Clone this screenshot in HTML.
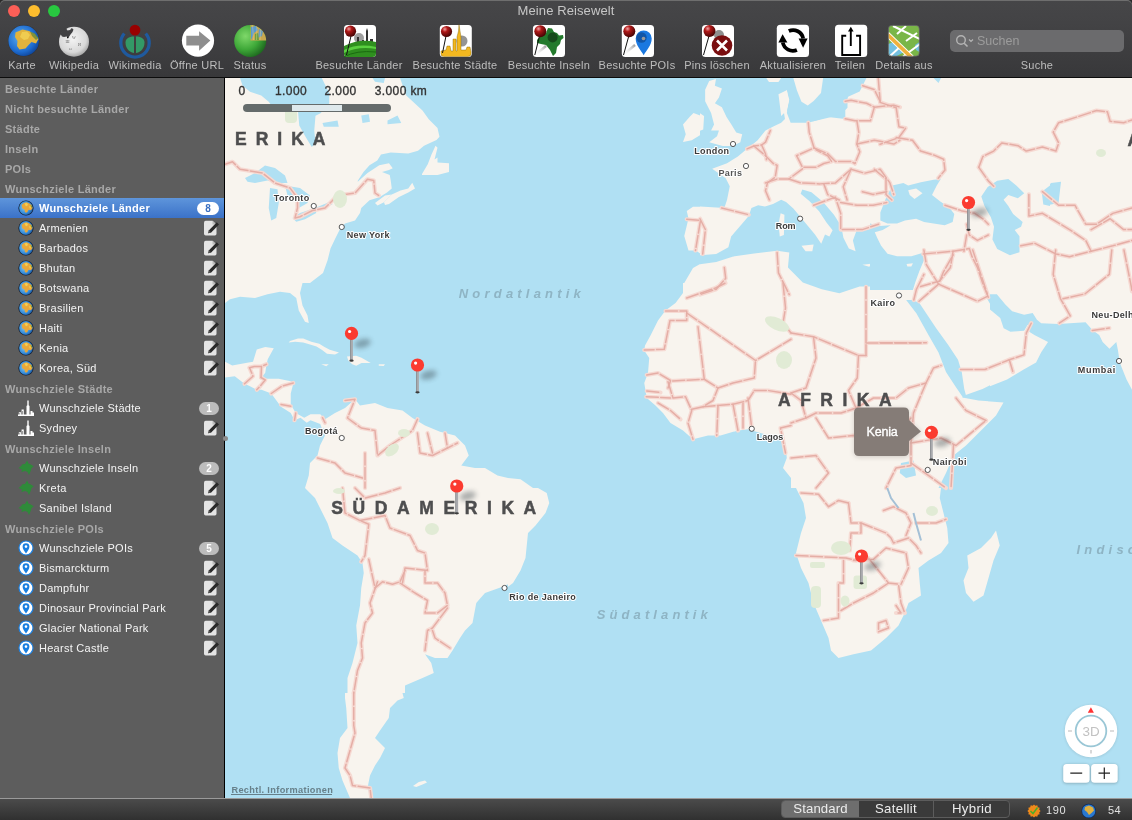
<!DOCTYPE html>
<html><head><meta charset="utf-8">
<style>
*{margin:0;padding:0;box-sizing:border-box}
html,body{width:1132px;height:820px;overflow:hidden;background:#2b2b2b;font-family:"Liberation Sans",sans-serif}
svg{display:block}
#toolbar{position:absolute;left:0;top:0;width:1132px;height:77px;background:linear-gradient(#464648,#434345 30%,#38383a);border-radius:5px 5px 0 0;box-shadow:inset 0 1px 0 #6e6e6e}
#tbline{position:absolute;left:0;top:77px;width:1132px;height:1px;background:#0c0c0c}
.tl{position:absolute;top:4.9px;width:12.2px;height:12.2px;border-radius:50%}
#title{position:absolute;top:3px;left:0;width:1132px;text-align:center;color:#c6c6c6;font-size:13px;line-height:16px;letter-spacing:0.1px}
.lbl{position:absolute;top:58px;width:120px;margin-left:-60px;font-size:11px;line-height:14px;color:#bdbdbd;white-space:nowrap;text-align:center;letter-spacing:0.27px}
.tbi{position:absolute}
#search{position:absolute;left:950px;top:30px;width:174px;height:22px;border-radius:5px;background:#6b6b6d}
#search span{position:absolute;left:27px;top:3px;font-size:12.5px;line-height:16px;color:#9c9c9c}
#sidebar{position:absolute;left:0;top:78px;width:224px;height:720px;background:#5d5d5d}
#sbline{position:absolute;left:224px;top:78px;width:1px;height:720px;background:#000}
.row{position:absolute;left:0;width:224px;height:20px;font-size:11px;line-height:20px;white-space:nowrap;color:#f4f4f4;letter-spacing:0.27px}
.hdr{color:#a8a8a8;font-weight:bold;padding-left:5px;line-height:22px}
.itm{padding-left:39px}
.sel{background:linear-gradient(#5e95db,#3b72c8);color:#fff;font-weight:bold}
.badge{position:absolute;left:199px;top:3.5px;height:13px;width:20px;border-radius:7px;background:#bcbcbc;color:#fff;font-size:10px;line-height:13px;text-align:center;font-weight:bold;letter-spacing:0}
.sel .badge{background:#fff;color:#3a6fc0;left:197px;width:22px;height:13px;top:4px}
.ico{position:absolute;left:18px;top:2px;width:16px;height:16px}
.edit{position:absolute;left:202px;top:2px;width:17px;height:16px}
#map{position:absolute;left:225px;top:78px;width:907px;height:720px;background:#b0e0f3;overflow:hidden}
#bottom{position:absolute;left:0;top:798px;width:1132px;height:22px;background:linear-gradient(#4b4b4b,#303030);border-top:1px solid #9a9a9a}

.row,.lbl,#title,#search span,#bottom div,#map>svg,#toolbar>svg{will-change:transform}

</style></head><body>
<svg width="0" height="0" style="position:absolute"><defs><radialGradient id="gblue" cx="0.4" cy="0.45" r="0.7"><stop offset="0" stop-color="#8fd0f0"/><stop offset="0.65" stop-color="#3088d8"/><stop offset="1" stop-color="#123a7a"/></radialGradient>
<symbol id="sgl" viewBox="0 0 16 16"><circle cx="8" cy="8" r="7.6" fill="#141c2a"/><circle cx="8" cy="8" r="6.9" fill="url(#gblue)"/><path d="M3.5,5 L6,3 L8.5,2.2 L11,3.2 L13.5,5 L14.6,8 L13,10.3 L10.5,9.8 L9,12.5 L7,12.2 L6.5,9.5 L4.5,8.5 Z" fill="#e9a83a"/><path d="M6.5,3.5 L9,3 L10,5 L8,6.5 Z M11,6 L13,7 L12,9 Z" fill="#f4cf52"/><path d="M12.5,4.5 L14.2,6.5 L13.5,8 Z" fill="#6f9a3a"/></symbol>
<symbol id="scity" viewBox="0 0 16 16"><path d="M0,16 L0,14.5 L0.8,14.5 L0.8,12.3 L3,12.3 L3,14.5 L3.6,14.5 L3.6,9.5 L5.8,9.5 L5.8,14.5 L8.5,14.5 L8.5,6 L9.3,5.2 L9.3,1 L10,0 L10.7,1 L10.7,5.2 L11.5,6 L11.5,14.5 L12.5,14.5 L12.5,11 L14.5,11 L14.5,12.5 L16,12.5 L16,16 Z" fill="#fff"/><rect x="1.5" y="13" width="0.6" height="1.5" fill="#606060"/><rect x="4.4" y="11" width="0.6" height="3.5" fill="#606060"/></symbol>
<symbol id="sisl" viewBox="0 0 16 16"><path d="M0.5,8 L3,6.3 L4.3,4.3 L7,4 L9.1,0.5 L10.5,3.5 L12.3,4.3 L15.7,6.2 L13.5,8.2 L12.9,10.5 L11,15 L9.5,12 L7.2,11 L3.4,11.9 L4,9.5 Z" fill="#2f8a3a"/></symbol>
<symbol id="spoi" viewBox="0 0 16 16"><circle cx="8" cy="8" r="7" fill="#fff" stroke="#1a7fe0" stroke-width="1.2"/><path d="M8 13.5 C6 10.5 4.6 9 4.6 6.6 A3.4 3.4 0 0 1 11.4 6.6 C11.4 9 10 10.5 8 13.5Z" fill="#1a7fe0"/><circle cx="8" cy="6.6" r="1.3" fill="#fff"/></symbol>
<symbol id="sedit" viewBox="0 0 17 16"><path d="M2,2.5 Q2,0.8 3.7,0.8 L10.5,0.8 L14.5,4.5 L14.5,13.8 Q14.5,15.5 12.8,15.5 L3.7,15.5 Q2,15.5 2,13.8 Z" fill="#e4e4e4"/><path d="M10.5,0.8 L10.5,4.5 L14.5,4.5 Z" fill="#bdbdbd"/><path d="M6.2,13.2 L7,10.3 L14.8,2.2 L17,4.4 L9.2,12.5 Z" fill="#2a2a2a"/><path d="M6.2,13.2 L7,10.3 L9.2,12.5 Z" fill="#555"/></symbol>
</defs></svg>
<div id="toolbar">
  <div class="tl" style="left:7.9px;background:#fc5f57"></div>
  <div class="tl" style="left:27.9px;background:#fdbd2e"></div>
  <div class="tl" style="left:47.9px;background:#28c840"></div>
  <svg width="1132" height="77" viewBox="0 0 1132 77" style="position:absolute;left:0;top:0">
<defs>
<radialGradient id="kg" cx="0.4" cy="0.4" r="0.7"><stop offset="0" stop-color="#5fb0f0"/><stop offset="0.65" stop-color="#1e6cd0"/><stop offset="1" stop-color="#0a3a8a"/></radialGradient>
<radialGradient id="wg" cx="0.45" cy="0.4" r="0.65"><stop offset="0" stop-color="#f4f4f4"/><stop offset="0.7" stop-color="#d8d8d8"/><stop offset="1" stop-color="#9a9a9a"/></radialGradient>
<radialGradient id="sg" cx="0.35" cy="0.35" r="0.7"><stop offset="0" stop-color="#7fd86a"/><stop offset="0.6" stop-color="#3ea838"/><stop offset="1" stop-color="#1f6a20"/></radialGradient>
<radialGradient id="rb" cx="0.35" cy="0.3" r="0.7"><stop offset="0" stop-color="#f0a0a0"/><stop offset="0.35" stop-color="#b01818"/><stop offset="1" stop-color="#4a0505"/></radialGradient>
<linearGradient id="sh" x1="0" y1="1" x2="1" y2="0"><stop offset="0" stop-color="#fff" stop-opacity="0"/><stop offset="1" stop-color="#777" stop-opacity="0.7"/></linearGradient>
</defs>
<!-- Karte -->
<circle cx="23.7" cy="40.7" r="15.6" fill="#222" opacity="0.5"/>
<circle cx="23.7" cy="40.7" r="15.3" fill="url(#kg)"/>
<path d="M15.5,32.5 L22.5,29.5 L29,31 L34.5,34 L38.5,39 L36,43.5 L31.5,42 L28.5,45 L25.5,48.5 L19.5,49.5 L17,46 L17.5,41 L15,37 Z" fill="#e2b33c"/>
<path d="M22,32 L27,31.5 L30,35 L28,39 L24,40 L20,37 Z" fill="#f0cc50"/>
<path d="M30,31.5 L35,33.5 L38.5,38 L36,40 L32,36 Z" fill="#6a8a3a" opacity="0.8"/>
<!-- Wikipedia -->
<circle cx="74" cy="41.7" r="15" fill="url(#wg)"/>
<path d="M60.5,34 L63.5,29.5 L66,28.2 L67.5,30.5 L70,30 L71.8,28 L73.5,29.5 L72.5,32 L70.5,34.5 L68.5,37.5 L66.5,36.5 L64,37 L62,36.5 Z" fill="#414143"/><circle cx="67.8" cy="37.6" r="0.8" fill="#000"/>
<g fill="#666" font-family="Liberation Serif" font-size="4">
<text x="65.5" y="43">Ш</text><text x="72" y="38.5">W</text><text x="78" y="46">И</text><text x="69" y="50">ω</text>
</g>
<!-- Wikimedia -->
<path d="M124.3,33.5 A14.2,14.2 0 1 0 145.7,33.5" fill="none" stroke="#1f5a9e" stroke-width="3.3"/>
<path d="M134,36.5 L134,53 C128,52 125.5,47 125.5,42.5 C125.5,39 128.5,36.5 134,36.5 Z" fill="#339966"/>
<path d="M136,36.5 L136,53 C142,52 144.5,47 144.5,42.5 C144.5,39 141.5,36.5 136,36.5 Z" fill="#339966"/>
<circle cx="135" cy="30.1" r="5.4" fill="#900"/>
<!-- Öffne URL -->
<circle cx="198" cy="40.6" r="16.1" fill="#fff"/>
<path d="M186.3,35.8 L199.1,35.8 L199.1,31.3 L210.4,40.6 L199.1,50.8 L199.1,45.5 L186.3,45.5 Z" fill="#8e8e8e"/>
<!-- Status -->
<circle cx="250.2" cy="41" r="16" fill="url(#sg)"/>
<clipPath id="stc"><circle cx="250.2" cy="41" r="16"/></clipPath>
<g clip-path="url(#stc)">
<rect x="250.5" y="24" width="17" height="16.5" fill="#c9a850"/>
<path d="M251,27 L256,26 L258,30 L254,33 L252,38 L251,40 Z" fill="#5a9ad0"/>
<path d="M259,29 L263,31 L262,36 L258,38 Z" fill="#5a9ad0" opacity="0.85"/>
<path d="M255,34 L258,33 L259,40 L255,40 Z M262,25 L266,27 L266,33 L263,30 Z" fill="#6da040"/>
<path d="M252.5,24 L253.5,40 M257,24 L256.5,40 M261,25 L260,40" stroke="#e8d890" stroke-width="0.6" opacity="0.7"/>
</g>
<!-- Besuchte Länder -->
<rect x="344" y="25" width="32" height="32" rx="3.5" fill="#fff"/>
<circle cx="359" cy="38" r="5" fill="#777" opacity="0.7"/>
<path d="M357,45 L357,37 L359,37 L359,45 M362,45 L362,40 L364,40 L364,45 M366,45 L366,31 L367,28 L368,31 L368,45 M370,45 L370,39 L373,39 L373,45" fill="#333"/>
<path d="M344,46 Q360,38 376,42 L376,53.5 Q376,57 372.5,57 L347.5,57 Q344,57 344,53.5 Z" fill="#2f8f1f"/>
<path d="M344,50 Q358,43 376,47 L376,49 Q358,46 344,53 Z" fill="#5ad040"/>
<path d="M344,57 Q356,50 376,52" fill="none" stroke="#1a6a10" stroke-width="1"/>
<line x1="351" y1="36" x2="346.5" y2="55" stroke="#111" stroke-width="1"/>
<circle cx="350.5" cy="31.2" r="5.6" fill="url(#rb)"/>
<!-- Besuchte Städte -->
<rect x="439.8" y="25" width="32" height="32" rx="3.5" fill="#fff"/>
<circle cx="462" cy="41" r="5.5" fill="#666" opacity="0.7"/>
<path d="M441,54 L441,51 L446,50 L447,46 L450,46 L451,51 L453,51 L453,39 L456,39 L456,51 L457,51 L457,37 L458.5,31 L459,24.5 L460,31 L461,37 L461,50 L466,50 L467,47 L470,47 L471,52 L471,53.5 Q471,56.5 468,56.5 L444,56.5 Q441,56.5 441,54 Z" fill="#f3b820" stroke="#7a5a00" stroke-width="0.4"/>
<line x1="446" y1="36" x2="442.5" y2="53" stroke="#111" stroke-width="1"/>
<circle cx="446.5" cy="31.5" r="5.6" fill="url(#rb)"/>
<!-- Besuchte Inseln -->
<rect x="532.9" y="24.9" width="32.1" height="32.1" rx="3.5" fill="#fff"/>
<path d="M537,40 L541,35 L546,33 L548,28 L552,28.5 L554,32 L557,33 L559,35.5 L563,35 L563.5,38 L561,40 L560,44 L557,47 L556,53 L553,56 L550,50 L546,45 L541,44 L537,43 Z" fill="#237a2c"/>
<circle cx="552.6" cy="37.5" r="5" fill="#164a1b"/>
<path d="M535,55 L546,46" stroke="url(#sh)" stroke-width="2.5"/>
<line x1="539.5" y1="36" x2="534.8" y2="55" stroke="#111" stroke-width="1"/>
<circle cx="540.3" cy="31.2" r="6" fill="url(#rb)"/>
<!-- Besuchte POIs -->
<rect x="621.8" y="24.9" width="32.2" height="32.1" rx="3.5" fill="#fff"/>
<path d="M643.7,55.3 C641,50 635.7,45.5 635.7,38.5 A8,8 0 0 1 651.7,38.5 C651.7,45.5 646.4,50 643.7,55.3 Z" fill="#1a78e0"/>
<circle cx="641.5" cy="37.5" r="5.2" fill="#0d3f80" opacity="0.6"/>
<circle cx="643.5" cy="38.5" r="1.8" fill="#999"/>
<path d="M623,55 L635,45" stroke="url(#sh)" stroke-width="2.5"/>
<line x1="628.8" y1="36" x2="623.5" y2="55" stroke="#111" stroke-width="1"/>
<circle cx="629.3" cy="31.2" r="6" fill="url(#rb)"/>
<!-- Pins löschen -->
<rect x="702" y="25" width="32" height="32" rx="3.5" fill="#fff"/>
<circle cx="719" cy="35" r="5" fill="#444" opacity="0.6"/>
<circle cx="722" cy="45.5" r="10.3" fill="#7a0e10"/>
<path d="M717,40.5 L727,50.5 M727,40.5 L717,50.5" stroke="#fff" stroke-width="2.6"/>
<line x1="709" y1="36" x2="703.5" y2="55" stroke="#111" stroke-width="1"/>
<circle cx="709.5" cy="31" r="6" fill="url(#rb)"/>
<!-- Aktualisieren -->
<rect x="776.8" y="24.7" width="32.2" height="32.2" rx="3.5" fill="#fff"/>
<path d="M788.8,31.1 A10.3,10.3 0 0 1 803.2,38.5" fill="none" stroke="#000" stroke-width="3.8"/>
<path d="M798.6,38.5 L807.6,38.5 L803.1,47.8 Z" fill="#000"/>
<path d="M796.9,50.0 A10.3,10.3 0 0 1 782.8,42.5" fill="none" stroke="#000" stroke-width="3.8"/>
<path d="M778.4,42.5 L787.4,42.5 L782.6,34.3 Z" fill="#000"/>
<!-- Teilen -->
<rect x="835" y="24.7" width="32.2" height="32.2" rx="3.5" fill="#fff"/>
<path d="M846.2,35.7 L842.2,35.7 L842.2,55 L860.1,55 L860.1,35.7 L856.1,35.7" fill="none" stroke="#000" stroke-width="1.9"/>
<path d="M850.8,46 L850.8,30" stroke="#000" stroke-width="1.9"/>
<path d="M848,31.5 L850.8,26.8 L853.6,31.5 Z" fill="#000"/>
<!-- Details aus -->
<clipPath id="dclip"><rect x="888.4" y="25.4" width="30.9" height="30.8" rx="3.5"/></clipPath>
<g clip-path="url(#dclip)">
<rect x="888.4" y="25.4" width="30.9" height="30.8" fill="#7ab648"/>
<path d="M888,44 L894,42 L900,46 L904,52 L896,56.5 L888,56.5 Z" fill="#74c0e0"/>
<path d="M915,45 L919.5,42 L919.5,52 L916,50 Z" fill="#74c0e0"/>
<path d="M893,26 L920,39 M903,56.5 L920,44 M889,57 L901,46 M897,34 L906,26 M906,41 L917,33" stroke="#fff" stroke-width="2"/>
<path d="M887,34 L912,58" stroke="#fff" stroke-width="5.5"/>
<path d="M887,34 L912,58" stroke="#efb13c" stroke-width="3.8"/>
</g>
<rect x="888.4" y="25.4" width="30.9" height="30.8" rx="3.5" fill="none" stroke="#6a6a6a" stroke-width="0.8"/>
</svg>
<div id="title">Meine Reisewelt</div>
  <div class="lbl" style="left:22.4px">Karte</div>
  <div class="lbl" style="left:73.7px">Wikipedia</div>
  <div class="lbl" style="left:134.6px">Wikimedia</div>
  <div class="lbl" style="left:197.2px">Öffne URL</div>
  <div class="lbl" style="left:249.5px">Status</div>
  <div class="lbl" style="left:359.2px">Besuchte Länder</div>
  <div class="lbl" style="left:455.2px">Besuchte Städte</div>
  <div class="lbl" style="left:549px">Besuchte Inseln</div>
  <div class="lbl" style="left:637.3px">Besuchte POIs</div>
  <div class="lbl" style="left:717.4px">Pins löschen</div>
  <div class="lbl" style="left:792.6px">Aktualisieren</div>
  <div class="lbl" style="left:850.4px">Teilen</div>
  <div class="lbl" style="left:903.7px">Details aus</div>
  <div class="lbl" style="left:1036.9px">Suche</div>
  <div id="search"><svg style="position:absolute;left:5px;top:4px" width="20" height="14" viewBox="0 0 20 14"><circle cx="6" cy="6" r="4.3" fill="none" stroke="#b4b4b4" stroke-width="1.4"/><path d="M9.2 9.2 L12.5 12.5" stroke="#b4b4b4" stroke-width="1.6"/><path d="M14 5.5 L16 7.5 L18 5.5" fill="none" stroke="#b4b4b4" stroke-width="1.2"/></svg><span>Suchen</span></div>
</div>

<div id="tbline"></div>
<div id="sidebar"></div>
<div id="sbline"></div>
<div class="row hdr" style="top:78px">Besuchte Länder</div>
<div class="row hdr" style="top:98px">Nicht besuchte Länder</div>
<div class="row hdr" style="top:118px">Städte</div>
<div class="row hdr" style="top:138px">Inseln</div>
<div class="row hdr" style="top:158px">POIs</div>
<div class="row hdr" style="top:178px">Wunschziele Länder</div>
<div class="row itm sel" style="top:198px"><svg class="ico" viewBox="0 0 16 16"><use href="#sgl"/></svg>Wunschziele Länder<div class="badge">8</div></div>
<div class="row itm" style="top:218px"><svg class="ico" viewBox="0 0 16 16"><use href="#sgl"/></svg>Armenien<svg class="edit" viewBox="0 0 17 16"><use href="#sedit"/></svg></div>
<div class="row itm" style="top:238px"><svg class="ico" viewBox="0 0 16 16"><use href="#sgl"/></svg>Barbados<svg class="edit" viewBox="0 0 17 16"><use href="#sedit"/></svg></div>
<div class="row itm" style="top:258px"><svg class="ico" viewBox="0 0 16 16"><use href="#sgl"/></svg>Bhutan<svg class="edit" viewBox="0 0 17 16"><use href="#sedit"/></svg></div>
<div class="row itm" style="top:278px"><svg class="ico" viewBox="0 0 16 16"><use href="#sgl"/></svg>Botswana<svg class="edit" viewBox="0 0 17 16"><use href="#sedit"/></svg></div>
<div class="row itm" style="top:298px"><svg class="ico" viewBox="0 0 16 16"><use href="#sgl"/></svg>Brasilien<svg class="edit" viewBox="0 0 17 16"><use href="#sedit"/></svg></div>
<div class="row itm" style="top:318px"><svg class="ico" viewBox="0 0 16 16"><use href="#sgl"/></svg>Haiti<svg class="edit" viewBox="0 0 17 16"><use href="#sedit"/></svg></div>
<div class="row itm" style="top:338px"><svg class="ico" viewBox="0 0 16 16"><use href="#sgl"/></svg>Kenia<svg class="edit" viewBox="0 0 17 16"><use href="#sedit"/></svg></div>
<div class="row itm" style="top:358px"><svg class="ico" viewBox="0 0 16 16"><use href="#sgl"/></svg>Korea, Süd<svg class="edit" viewBox="0 0 17 16"><use href="#sedit"/></svg></div>
<div class="row hdr" style="top:378px">Wunschziele Städte</div>
<div class="row itm" style="top:398px"><svg class="ico" viewBox="0 0 16 16"><use href="#scity"/></svg>Wunschziele Städte<div class="badge">1</div></div>
<div class="row itm" style="top:418px"><svg class="ico" viewBox="0 0 16 16"><use href="#scity"/></svg>Sydney<svg class="edit" viewBox="0 0 17 16"><use href="#sedit"/></svg></div>
<div class="row hdr" style="top:438px">Wunschziele Inseln</div>
<div class="row itm" style="top:458px"><svg class="ico" viewBox="0 0 16 16"><use href="#sisl"/></svg>Wunschziele Inseln<div class="badge">2</div></div>
<div class="row itm" style="top:478px"><svg class="ico" viewBox="0 0 16 16"><use href="#sisl"/></svg>Kreta<svg class="edit" viewBox="0 0 17 16"><use href="#sedit"/></svg></div>
<div class="row itm" style="top:498px"><svg class="ico" viewBox="0 0 16 16"><use href="#sisl"/></svg>Sanibel Island<svg class="edit" viewBox="0 0 17 16"><use href="#sedit"/></svg></div>
<div class="row hdr" style="top:518px">Wunschziele POIs</div>
<div class="row itm" style="top:538px"><svg class="ico" viewBox="0 0 16 16"><use href="#spoi"/></svg>Wunschziele POIs<div class="badge">5</div></div>
<div class="row itm" style="top:558px"><svg class="ico" viewBox="0 0 16 16"><use href="#spoi"/></svg>Bismarckturm<svg class="edit" viewBox="0 0 17 16"><use href="#sedit"/></svg></div>
<div class="row itm" style="top:578px"><svg class="ico" viewBox="0 0 16 16"><use href="#spoi"/></svg>Dampfuhr<svg class="edit" viewBox="0 0 17 16"><use href="#sedit"/></svg></div>
<div class="row itm" style="top:598px"><svg class="ico" viewBox="0 0 16 16"><use href="#spoi"/></svg>Dinosaur Provincial Park<svg class="edit" viewBox="0 0 17 16"><use href="#sedit"/></svg></div>
<div class="row itm" style="top:618px"><svg class="ico" viewBox="0 0 16 16"><use href="#spoi"/></svg>Glacier National Park<svg class="edit" viewBox="0 0 17 16"><use href="#sedit"/></svg></div>
<div class="row itm" style="top:638px"><svg class="ico" viewBox="0 0 16 16"><use href="#spoi"/></svg>Hearst Castle<svg class="edit" viewBox="0 0 17 16"><use href="#sedit"/></svg></div>
<div id="map"><svg width="907" height="720" viewBox="0 0 907 720" style="position:absolute;left:0;top:0">
<defs>
<clipPath id="cA"><rect width="1132" height="820"/></clipPath>
<clipPath id="cB"><rect width="232" height="820"/></clipPath>
<clipPath id="cC"><rect width="1132" height="420"/></clipPath>
</defs>
<g fill="#f8f4ee">
<!-- T00 -->
<g transform="translate(0,0) scale(0.25)" clip-path="url(#cA)">
<path d="M0,0 L700,0 L725,70 L790,130 L815,165 L850,200 L858,235 L846,248 L796,271 L772,291 L733,302 L663,298 L624,306 L609,330 L578,349 L554,376 L531,411 L531,415 L570,380 L617,349 L656,341 L671,361 L656,368 L628,376 L659,388 L663,411 L667,442 L648,458 L617,477 L578,489 L545,520 L540,540 L520,570 L480,582 L462,600 L442,640 L422,682 L410,730 L392,780 L340,820 L0,820 Z"/>
<path d="M788,384 L811,345 L826,306 L842,271 L850,279 L838,326 L850,318 L850,338 L896,341 L896,376 L850,388 L788,388 Z"/>
<path d="M636,497 L667,466 L702,450 L733,442 L749,419 L760,442 L733,458 L694,477 L656,504 L640,508 Z"/>
<path d="M600,500 L640,470 L667,466 L636,497 L610,510 Z"/>
<g fill="#b0e0f3">
<path d="M60,0 L70,30 L100,55 L145,70 L175,95 L190,115 L292,132 L297,190 L322,235 L347,276 L362,261 L357,211 L362,151 L382,141 L417,101 L417,61 L387,0 Z"/>
<path d="M590,0 L640,0 L635,20 L600,15 Z"/>
<path d="M80,400 L120,380 L160,350 L200,360 L240,390 L250,420 L210,420 L170,410 L120,420 L90,415 Z"/>
<path d="M180,440 L210,445 L215,500 L205,560 L185,570 L175,520 Z"/>
<path d="M240,430 L300,440 L340,470 L330,500 L295,520 L280,480 L250,470 Z"/>
<path d="M270,560 L300,540 L360,520 L365,540 L320,565 L285,575 Z"/>
<path d="M360,520 L420,495 L430,505 L380,525 Z"/>
<path d="M390,180 L450,170 L455,195 L395,195 Z"/>
<path d="M650,170 L690,150 L705,180 L650,185 Z"/>
<path d="M545,150 L575,145 L580,175 L550,180 Z"/>
</g>
</g>
<!-- T01 -->
<g transform="translate(283,0) scale(0.25)" clip-path="url(#cA)">
<path d="M805,12 L832,4 L828,31 L855,43 L843,78 L828,101 L855,117 L875,155 L894,186 L913,218 L937,225 L929,256 L898,272 L859,272 L805,256 L836,233 L843,210 L812,210 L824,186 L812,140 L789,93 L789,47 Z"/>
<path d="M700,186 L727,155 L742,140 L774,152 L781,171 L774,225 L735,249 L700,256 L711,225 Z"/>
<path d="M1132,140 L1110,160 L1090,175 L1060,195 L1045,215 L1005,245 L975,270 L945,290 L920,315 L880,340 L845,352 L815,360 L840,385 L870,405 L882,440 L888,480 L870,520 L805,515 L740,515 L715,532 L722,562 L705,632 L722,690 L752,690 L782,712 L832,702 L880,680 L895,640 L925,600 L962,555 L975,525 L1010,512 L1062,512 L1095,492 L1132,485 Z"/>
<path d="M705,820 L740,760 L790,732 L835,742 L880,722 L960,705 L1045,700 L1132,690 L1132,820 Z"/>
<path d="M1090,545 L1105,540 L1108,600 L1100,640 L1085,630 L1092,590 Z"/>
<path d="M1085,80 L1110,50 L1132,70 L1132,150 L1100,140 L1085,110 Z"/>
<path d="M1030,0 L1090,0 L1080,15 L1045,20 Z"/>
</g>
<!-- T02 -->
<g transform="translate(566,0) scale(0.25)" clip-path="url(#cA)">
<rect width="1132" height="820"/>
<g fill="#b0e0f3">
<path d="M0,0 L22,0 L30,50 L45,100 L70,115 L110,60 L120,0 L285,0 L275,40 L235,70 L215,100 L195,150 L150,160 L70,180 L0,180 Z"/>
<path d="M30,445 L55,460 L105,505 L150,545 L195,590 L205,620 L175,640 L140,620 L150,575 L100,525 L45,470 Z"/>
<path d="M0,560 L60,590 L100,640 L125,655 L140,625 L175,640 L205,620 L215,650 L240,690 L265,690 L270,650 L260,610 L300,590 L340,600 L330,640 L350,660 L400,705 L470,720 L530,700 L540,720 L520,780 L510,820 L0,820 Z"/>
<path d="M360,520 L400,460 L420,430 L460,420 L500,440 L560,420 L600,400 L590,440 L570,470 L610,510 L660,530 L650,570 L600,590 L540,580 L470,565 L420,570 L370,575 L355,550 Z"/>
<path d="M760,480 L800,430 L850,405 L900,420 L930,470 L890,490 L850,490 L860,540 L890,560 L920,600 L910,700 L860,700 L820,650 L810,600 L790,540 Z"/>
<path d="M1000,470 L1040,420 L1080,415 L1070,500 L1020,510 Z"/>
<path d="M570,0 L600,0 L590,20 Z"/>
</g>
<path d="M470,450 L505,445 L530,470 L490,485 Z"/>
<path d="M40,675 L90,668 L85,690 L55,690 Z"/>
<path d="M455,745 L490,740 L480,755 Z"/>
</g>
<!-- T03 -->
<g transform="translate(849,0) scale(0.25)" clip-path="url(#cB)"><rect width="232" height="820"/></g>
<!-- T10 -->
<g transform="translate(0,205) scale(0.25)" clip-path="url(#cA)">
<path d="M0,0 L310,0 L300,40 L310,90 L330,130 L335,160 L320,155 L295,110 L285,60 L260,40 L220,35 L170,45 L120,60 L60,55 L20,65 L0,80 Z"/>
<path d="M0,315 L29,330 L83,320 L112,315 L127,266 L161,256 L195,261 L171,305 L166,325 L161,359 L146,378 L166,383 L215,383 L263,393 L273,403 L263,442 L263,486 L283,520 L317,539 L342,525 L381,525 L405,549 L420,535 L390,588 L381,564 L342,549 L327,559 L302,539 L278,549 L263,520 L224,495 L185,442 L146,427 L127,427 L98,412 L78,403 L39,373 L0,378 Z"/>
<path d="M400,545 L440,520 L480,500 L520,465 L540,490 L600,480 L650,500 L710,510 L750,540 L800,570 L860,595 L920,610 L960,650 L975,690 L945,730 L1000,740 L1040,740 L1090,770 L1132,780 L1132,820 L320,820 L335,770 L340,720 L370,690 L380,650 L400,610 L395,570 Z"/>
<path d="M255,238 L260,232 L292,222 L313,222 L345,235 L377,243 L398,256 L419,267 L456,278 L440,286 L408,283 L387,267 L366,254 L340,246 L313,238 L281,235 Z"/>
<path d="M488,294 L525,291 L546,299 L583,320 L546,320 L525,331 L509,325 L493,310 Z"/>
<path d="M385,325 L415,325 L405,333 Z"/>
<path d="M615,325 L640,325 L635,332 L615,331 Z"/>
</g>
<!-- T11 -->
<g transform="translate(283,205) scale(0.25)" clip-path="url(#cA)">
<path d="M700,0 L1132,0 L1132,780 L1100,740 L1115,700 L1110,640 L1080,620 L1010,600 L960,585 L920,590 L850,610 L800,610 L740,625 L700,590 L650,560 L620,520 L590,490 L555,460 L550,430 L545,400 L560,360 L565,300 L545,270 L548,250 L570,210 L600,150 L630,110 L670,80 L700,40 Z"/>
<path d="M0,780 L50,785 L100,820 L0,820 Z"/>
</g>
<!-- T12 -->
<g transform="translate(566,205) scale(0.25)" clip-path="url(#cA)">
<rect width="1132" height="820"/>
<g fill="#b0e0f3">
<path d="M0,0 L505,0 L490,25 L400,22 L330,15 L250,25 L190,45 L140,30 L90,15 L0,10 Z"/>
<path d="M1132,150 L1070,160 L1000,165 L960,160 L945,200 L990,215 L1029,239 L990,290 L942,326 L864,375 L766,424 L693,450 L685,458 L750,470 L850,478 L820,530 L770,580 L700,650 L650,690 L620,760 L590,820 L1132,820 Z"/>
<path d="M453,58 L502,122 L551,210 L590,278 L620,356 L658,414 L688,458 L700,450 L693,424 L683,356 L668,307 L629,248 L580,180 L512,78 Z"/>
<path d="M780,55 L820,70 L870,120 L940,125 L965,155 L945,195 L900,185 L855,170 L835,130 L800,90 Z"/>
<path d="M440,720 L490,710 L500,770 L460,780 L435,760 Z"/>
</g>
</g>
<!-- T13 -->
<g transform="translate(849,205) scale(0.25)" clip-path="url(#cB)">
<path d="M0,0 L232,0 L232,460 L215,400 L195,340 L185,280 L180,240 L165,230 L150,260 L120,240 L100,200 L80,180 L50,160 L0,150 Z"/>
</g>
<!-- T20 -->
<g transform="translate(0,410) scale(0.25)" clip-path="url(#cA)">
<path d="M320,0 L1132,0 L1132,385 L1110,395 L1040,420 L1005,460 L990,540 L960,570 L940,600 L910,650 L890,680 L840,680 L800,665 L825,700 L835,740 L790,760 L720,790 L720,820 L490,820 L490,760 L510,700 L530,620 L525,550 L540,470 L545,400 L555,340 L550,300 L530,270 L470,230 L430,200 L410,140 L380,80 L360,40 Z"/>
</g>
<!-- T21 -->
<g transform="translate(283,410) scale(0.25)" clip-path="url(#cA)">
<path d="M0,0 L120,0 L155,20 L165,60 L150,100 L110,150 L80,180 L75,230 L70,280 L50,330 L20,380 L0,395 Z"/>
</g>
<!-- T22 -->
<g transform="translate(566,410) scale(0.25)" clip-path="url(#cA)">
<path d="M20,0 L600,0 L595,40 L610,100 L625,160 L630,220 L600,260 L550,290 L510,320 L515,380 L520,430 L470,460 L455,500 L430,550 L380,600 L320,650 L250,665 L190,680 L160,650 L150,600 L120,530 L90,460 L70,380 L40,320 L20,260 L40,180 L60,120 L50,60 L30,20 Z"/>
<path d="M820,170 L835,230 L810,290 L790,360 L770,430 L730,455 L700,420 L690,370 L710,320 L705,270 L760,240 L800,200 Z"/>
</g>
<!-- T30 -->
<g transform="translate(0,615) scale(0.25)" clip-path="url(#cC)">
<path d="M480,0 L710,0 L715,20 L690,30 L660,60 L655,100 L620,150 L600,180 L640,220 L620,260 L600,290 L580,330 L570,380 L585,420 L500,420 L470,350 L455,300 L450,240 L460,180 L490,140 L485,60 L480,20 Z"/>
<path d="M752,372 L775,356 L800,350 L808,358 L790,366 L765,376 Z"/>
</g>
<!-- PATCH EUROPE [700,78,920,300] s=3.6937 -->
<g transform="translate(475,0) scale(0.270603,0.270732)">
<rect width="813" height="820" fill="#b0e0f3"/>
<path d="M0,475 L90,480 L100,450 L110,400 L95,370 L45,335 L100,315 L140,290 L175,260 L174,262 L213,230 L242,194 L271,179 L300,165 L314,151 L307,108 L300,79 L321,43 L328,86 L321,129 L335,165 L400,165 L472,144 L537,151 L537,93 L558,43 L601,29 L608,0 L813,0 L813,392 L770,385 L720,395 L695,430 L670,470 L675,510 L700,530 L650,545 L620,560 L580,560 L565,600 L575,640 L550,630 L530,590 L522,548 L495,505 L455,458 L412,422 L378,412 L372,428 L405,455 L440,492 L468,535 L490,562 L478,585 L462,578 L448,612 L425,578 L385,530 L345,482 L318,458 L300,450 L270,465 L240,475 L215,470 L190,480 L180,510 L150,545 L115,585 L105,625 L60,650 L0,655 Z"/>
<path d="M34,11 L59,4 L55,29 L81,39 L70,72 L55,93 L81,108 L98,144 L116,172 L134,201 L156,208 L149,237 L120,251 L84,251 L34,237 L63,215 L70,194 L41,194 L52,172 L41,129 L19,86 L19,43 Z"/>
<path d="M0,130 L15,140 L12,190 L0,195 Z"/>
<path d="M640,570 L700,548 L760,540 L813,528 L813,655 L780,640 L720,650 L680,640 L650,605 Z"/>
<path d="M785,410 L813,405 L813,440 L790,435 Z"/>
<path d="M0,688 L60,680 L120,660 L200,648 L285,638 L330,645 L325,700 L380,755 L450,780 L515,795 L590,770 L660,770 L720,775 L813,780 L813,820 L0,820 Z"/>
<path d="M298,500 L312,505 L310,580 L295,585 L290,540 Z"/>
<path d="M375,620 L420,615 L415,640 L390,640 Z"/>
<path d="M600,690 L640,685 L625,697 Z"/>
<path d="M245,0 L300,0 L290,15 L255,15 Z"/>
<path d="M290,60 L320,45 L330,80 L320,120 L300,140 L295,100 Z"/>
<g fill="#b0e0f3">
<path d="M330,0 L360,0 L380,80 L400,100 L440,60 L450,0 L615,0 L605,20 L590,50 L545,70 L545,110 L520,135 L470,148 L420,160 L380,160 L335,148 L322,120 L332,80 Z"/>
</g>
<path d="M345,0 L455,0 L447,55 L420,85 L398,102 L375,88 L358,45 Z"/>
</g>
<!-- PATCH ME [870,160,1050,290] -->
<g transform="translate(645,82) scale(0.159011,0.158924)">
<rect width="1132" height="818"/>
<g fill="#b0e0f3">
<path d="M65,330 L100,240 L140,160 L210,145 L240,160 L320,140 L400,125 L445,120 L420,160 L400,200 L390,220 L440,260 L500,300 L530,340 L520,390 L470,410 L400,400 L340,390 L290,370 L220,380 L170,400 L110,400 L65,380 Z"/>
<path d="M0,400 L60,415 L130,410 L80,440 L30,455 L45,490 L70,540 L110,590 L170,605 L260,605 L345,580 L340,630 L310,700 L285,770 L270,818 L0,818 Z"/>
<path d="M700,230 L740,170 L800,130 L870,120 L920,160 L970,210 L930,240 L870,220 L840,250 L870,290 L900,340 L960,390 L950,420 L910,440 L940,480 L940,580 L880,600 L800,560 L770,500 L780,420 L760,360 L720,290 Z"/>
<path d="M1080,200 L1132,160 L1132,290 L1090,280 Z"/>
</g>
<path d="M240,190 L290,180 L330,210 L280,245 L250,220 Z"/>
<path d="M230,655 L270,650 L260,670 L235,670 Z"/>
</g>
<!-- PATCH ARABIA [990,260,1132,400] -->
<g transform="translate(765,182) scale(0.170673,0.170732)">
<rect width="832" height="820"/>
<path fill="#b0e0f3" d="M0,200 L40,200 L90,260 L130,300 L200,320 L250,310 L275,350 L300,370 L400,375 L560,365 L600,410 L640,440 L660,480 L700,520 L740,480 L750,530 L760,600 L800,700 L832,760 L832,820 L0,820 L0,740 L100,700 L200,640 L270,600 L300,540 L340,480 L260,440 L230,420 L240,380 L220,380 L200,415 L120,420 L80,400 L60,340 L0,290 Z"/>
</g>
</g>
</svg>
<svg width="907" height="720" viewBox="0 0 907 720" style="position:absolute;left:0;top:0">
<g fill="none" stroke-linejoin="round" stroke-linecap="round">
<g stroke="#f6dad3" stroke-width="4.2"><g transform="translate(0,0) scale(0.25,0.25)">
<polyline vector-effect="non-scaling-stroke" points="0,345 30,335 60,365 150,380 200,420 260,440 290,480 290,520 280,560 300,555 350,530 400,520 450,470 520,460 570,405 595,410 600,460 615,470"/>
</g>
<g transform="translate(283,0) scale(0.25,0.25)">
<polyline vector-effect="non-scaling-stroke" points="715,565 770,570 750,690"/>
</g>
<g transform="translate(655,0) scale(0.270709,0.270709)">
<polyline vector-effect="non-scaling-stroke" points="0,90 60,110 70,180 95,185 70,220 0,245"/>
<polyline vector-effect="non-scaling-stroke" points="60,220 120,230 150,270 200,285 235,300 240,340 215,370"/>
<polyline vector-effect="non-scaling-stroke" points="240,470 300,490 350,500 380,520 400,540"/>
<polyline vector-effect="non-scaling-stroke" points="320,540 330,580 360,600 400,580"/>
<polyline vector-effect="non-scaling-stroke" points="160,650 270,640 330,630 340,660 360,700 380,760 400,810"/>
<polyline vector-effect="non-scaling-stroke" points="270,640 260,700 220,750 150,770"/>
<polyline vector-effect="non-scaling-stroke" points="365,330 380,290 420,270 450,240 510,250 540,270 600,255 650,270 660,240 640,200 660,165 740,140 800,120 840,125 850,160 900,165 931,155"/>
<polyline vector-effect="non-scaling-stroke" points="365,330 400,380 420,400"/>
<polyline vector-effect="non-scaling-stroke" points="550,430 550,510 600,500 700,560 760,600 780,640"/>
<polyline vector-effect="non-scaling-stroke" points="600,420 660,470 720,470 760,540 800,540 860,500 931,480"/>
<polyline vector-effect="non-scaling-stroke" points="520,620 570,610 650,650 700,660 780,640 860,620 931,600"/>
<polyline vector-effect="non-scaling-stroke" points="780,560 850,520 900,560 931,560"/>
<polyline vector-effect="non-scaling-stroke" points="320,580 310,640"/>
</g>
<g transform="translate(475,0) scale(0.270603,0.270732)">
<polyline vector-effect="non-scaling-stroke" points="420,470 500,440 520,500 520,560 600,560 660,540"/>
<polyline vector-effect="non-scaling-stroke" points="520,460 580,470 640,470 690,460"/>
<polyline vector-effect="non-scaling-stroke" points="80,480 180,505"/>
<polyline vector-effect="non-scaling-stroke" points="0,520 20,560 10,650"/>
<polyline vector-effect="non-scaling-stroke" points="90,700 95,740 60,780 0,800"/>
<polyline vector-effect="non-scaling-stroke" points="285,645 290,720 330,800"/>
<polyline vector-effect="non-scaling-stroke" points="800,780 790,820"/>
<polyline vector-effect="non-scaling-stroke" points="600,420 640,430 690,420"/>
</g>
<g transform="translate(455,0) scale(0.194346,0.194268)">
<polyline vector-effect="non-scaling-stroke" points="345,365 380,350 420,345 440,330 465,270"/>
<polyline vector-effect="non-scaling-stroke" points="380,350 440,400 480,440 500,450 490,510 450,540 440,580 460,628"/>
<polyline vector-effect="non-scaling-stroke" points="420,345 440,390 445,420"/>
<polyline vector-effect="non-scaling-stroke" points="660,230 665,280 690,360 600,400"/>
<polyline vector-effect="non-scaling-stroke" points="600,400 630,460 700,460 740,440 780,430 760,400 700,370"/>
<polyline vector-effect="non-scaling-stroke" points="690,360 760,390 800,430 880,430 900,440"/>
<polyline vector-effect="non-scaling-stroke" points="910,220 920,280 910,340 925,380 900,440"/>
<polyline vector-effect="non-scaling-stroke" points="910,340 1000,320 1100,340 1132,320"/>
<polyline vector-effect="non-scaling-stroke" points="850,120 880,115 960,130 1000,150 1100,140 1132,150"/>
<polyline vector-effect="non-scaling-stroke" points="850,210 900,220 980,220 1000,150"/>
<polyline vector-effect="non-scaling-stroke" points="940,40 1000,60 1030,120"/>
<polyline vector-effect="non-scaling-stroke" points="1020,0 1030,120"/>
<polyline vector-effect="non-scaling-stroke" points="440,540 500,520 560,520 640,460"/>
<polyline vector-effect="non-scaling-stroke" points="560,520 620,540 720,545 800,540 880,470"/>
<polyline vector-effect="non-scaling-stroke" points="880,470 950,490 1030,470 1080,540 1100,600"/>
<polyline vector-effect="non-scaling-stroke" points="740,545 760,600 820,628"/>
<polyline vector-effect="non-scaling-stroke" points="880,470 840,560 860,628"/>
<polyline vector-effect="non-scaling-stroke" points="1000,470 1060,520 1060,600 1090,628"/>
</g>
<g transform="translate(0,205) scale(0.25,0.25)">
<polyline vector-effect="non-scaling-stroke" points="480,470 520,465 490,540 545,580 600,590 610,690 660,650 690,630 750,590 770,545"/>
<polyline vector-effect="non-scaling-stroke" points="770,600 780,680 830,690 890,660 930,640"/>
<polyline vector-effect="non-scaling-stroke" points="810,600 830,680"/>
<polyline vector-effect="non-scaling-stroke" points="880,600 890,660"/>
<polyline vector-effect="non-scaling-stroke" points="370,700 440,720 480,760 550,780"/>
<polyline vector-effect="non-scaling-stroke" points="560,680 560,820"/>
<polyline vector-effect="non-scaling-stroke" points="98,339 117,334 146,334 166,325"/>
<polyline vector-effect="non-scaling-stroke" points="146,334 144,378"/>
<polyline vector-effect="non-scaling-stroke" points="78,403 112,373 98,339"/>
<polyline vector-effect="non-scaling-stroke" points="144,378 161,388 141,412 127,427"/>
<polyline vector-effect="non-scaling-stroke" points="185,442 229,412 273,400"/>
<polyline vector-effect="non-scaling-stroke" points="224,486 263,493"/>
<polyline vector-effect="non-scaling-stroke" points="283,520 278,549"/>
<polyline vector-effect="non-scaling-stroke" points="390,539 400,559"/>
</g>
<g transform="translate(283,205) scale(0.25,0.25)">
<polyline vector-effect="non-scaling-stroke" points="630,112 715,112 715,150 648,150 625,265 545,268"/>
<polyline vector-effect="non-scaling-stroke" points="715,60 830,20 870,0"/>
<polyline vector-effect="non-scaling-stroke" points="715,120 990,310 1132,225"/>
<polyline vector-effect="non-scaling-stroke" points="760,175 785,385 650,392 640,420"/>
<polyline vector-effect="non-scaling-stroke" points="650,390 600,360 555,368"/>
<polyline vector-effect="non-scaling-stroke" points="640,395 660,460 710,455 735,510 720,560 740,625"/>
<polyline vector-effect="non-scaling-stroke" points="555,432 610,438"/>
<polyline vector-effect="non-scaling-stroke" points="553,455 650,460"/>
<polyline vector-effect="non-scaling-stroke" points="600,480 650,510 690,545"/>
<polyline vector-effect="non-scaling-stroke" points="785,385 840,420 900,400 985,380 990,310"/>
<polyline vector-effect="non-scaling-stroke" points="735,505 780,495 820,470 840,420"/>
<polyline vector-effect="non-scaling-stroke" points="840,490 835,610"/>
<polyline vector-effect="non-scaling-stroke" points="780,495 900,485 960,470 985,430"/>
<polyline vector-effect="non-scaling-stroke" points="900,485 920,590"/>
<polyline vector-effect="non-scaling-stroke" points="940,480 940,580"/>
<polyline vector-effect="non-scaling-stroke" points="960,460 975,580"/>
<polyline vector-effect="non-scaling-stroke" points="985,430 1040,430 1132,445"/>
<polyline vector-effect="non-scaling-stroke" points="1100,0 1110,100 1100,160 1132,200"/>
<polyline vector-effect="non-scaling-stroke" points="1132,570 1090,580 1110,680"/>
</g>
<g transform="translate(566,205) scale(0.25,0.25)">
<polyline vector-effect="non-scaling-stroke" points="300,15 300,290"/>
<polyline vector-effect="non-scaling-stroke" points="300,240 520,240"/>
<polyline vector-effect="non-scaling-stroke" points="0,200 90,215 270,290 300,290"/>
<polyline vector-effect="non-scaling-stroke" points="90,215 100,300 60,420 0,440"/>
<polyline vector-effect="non-scaling-stroke" points="270,290 265,380 230,430 260,500"/>
<polyline vector-effect="non-scaling-stroke" points="0,440 40,470 60,540 0,560"/>
<polyline vector-effect="non-scaling-stroke" points="60,540 100,520 200,520 260,500"/>
<polyline vector-effect="non-scaling-stroke" points="100,540 150,620 250,610 300,620 400,620"/>
<polyline vector-effect="non-scaling-stroke" points="260,500 330,460 420,460 470,420 540,400 570,340 600,330"/>
<polyline vector-effect="non-scaling-stroke" points="540,400 490,520 480,640"/>
<polyline vector-effect="non-scaling-stroke" points="480,540 420,600 400,620"/>
<polyline vector-effect="non-scaling-stroke" points="480,640 600,620 660,650 780,550"/>
<polyline vector-effect="non-scaling-stroke" points="660,460 700,510 780,550"/>
<polyline vector-effect="non-scaling-stroke" points="650,650 640,820"/>
<polyline vector-effect="non-scaling-stroke" points="480,640 480,730 420,740 380,820"/>
<polyline vector-effect="non-scaling-stroke" points="480,720 620,820"/>
<polyline vector-effect="non-scaling-stroke" points="0,700 100,690 150,760 100,820"/>
</g>
<g transform="translate(655,172) scale(0.243962,0.243902)">
<polyline vector-effect="non-scaling-stroke" points="330,490 430,490 530,450 590,430 600,340 620,300"/>
<polyline vector-effect="non-scaling-stroke" points="530,450 545,500"/>
<polyline vector-effect="non-scaling-stroke" points="0,380 190,380"/>
<polyline vector-effect="non-scaling-stroke" points="160,210 240,140 260,90 300,20"/>
<polyline vector-effect="non-scaling-stroke" points="240,140 400,210 440,190"/>
<polyline vector-effect="non-scaling-stroke" points="380,0 400,60 440,180"/>
<polyline vector-effect="non-scaling-stroke" points="720,0 710,100 740,200 780,270 735,300"/>
<polyline vector-effect="non-scaling-stroke" points="950,0 940,100 840,180 750,200"/>
<polyline vector-effect="non-scaling-stroke" points="870,330 940,320"/>
<polyline vector-effect="non-scaling-stroke" points="1000,0 1030,150 1033,170"/>
<polyline vector-effect="non-scaling-stroke" points="150,160 180,100"/>
<polyline vector-effect="non-scaling-stroke" points="180,0 190,60 240,140"/>
</g>
<g transform="translate(0,410) scale(0.25,0.25)">
<polyline vector-effect="non-scaling-stroke" points="470,0 480,100 540,130 575,145 560,270 545,295"/>
<polyline vector-effect="non-scaling-stroke" points="540,130 640,110 660,160 740,190 770,250 800,260 810,330 720,320 710,380"/>
<polyline vector-effect="non-scaling-stroke" points="575,285 600,400 630,375 670,385 700,375 720,330"/>
<polyline vector-effect="non-scaling-stroke" points="700,380 760,420 810,450 800,500 850,500 890,470 880,420 850,380 800,380 800,330"/>
<polyline vector-effect="non-scaling-stroke" points="610,375 580,460 590,500 560,540 545,620 550,680 530,730 515,820"/>
<polyline vector-effect="non-scaling-stroke" points="890,480 830,560 810,570 800,650"/>
<polyline vector-effect="non-scaling-stroke" points="830,570 840,600 900,640"/>
<polyline vector-effect="non-scaling-stroke" points="520,0 560,40 640,20 700,0"/>
</g>
<g transform="translate(566,410) scale(0.25,0.25)">
<polyline vector-effect="non-scaling-stroke" points="20,270 220,280 260,290"/>
<polyline vector-effect="non-scaling-stroke" points="230,60 240,140 280,140 280,180 240,180 235,250"/>
<polyline vector-effect="non-scaling-stroke" points="40,20 110,25 150,75 190,50 230,60"/>
<polyline vector-effect="non-scaling-stroke" points="280,140 380,180 400,200 410,220 470,200 500,230 520,260"/>
<polyline vector-effect="non-scaling-stroke" points="370,90 410,75 460,100 480,140 460,190"/>
<polyline vector-effect="non-scaling-stroke" points="500,140 580,140 620,125"/>
<polyline vector-effect="non-scaling-stroke" points="210,290 210,380 190,380 190,520 130,530"/>
<polyline vector-effect="non-scaling-stroke" points="250,290 330,285 380,240 460,260 470,320 440,385"/>
<polyline vector-effect="non-scaling-stroke" points="310,280 390,380 430,385 440,460 455,500"/>
<polyline vector-effect="non-scaling-stroke" points="200,490 250,460 330,420 390,380"/>
<polyline vector-effect="non-scaling-stroke" points="350,540 380,530 390,560 350,575 350,540"/>
<polyline vector-effect="non-scaling-stroke" points="420,470 440,500 420,500"/>
</g>
<g transform="translate(0,615) scale(0.25,0.25)">
<polyline vector-effect="non-scaling-stroke" points="515,0 515,130 520,160 480,300 500,330 510,370 580,380 585,420"/>
</g></g>
<g stroke="#e5aea6" stroke-width="1.5" stroke-dasharray="12 2.5"><g transform="translate(0,0) scale(0.25,0.25)">
<polyline vector-effect="non-scaling-stroke" points="0,345 30,335 60,365 150,380 200,420 260,440 290,480 290,520 280,560 300,555 350,530 400,520 450,470 520,460 570,405 595,410 600,460 615,470"/>
</g>
<g transform="translate(283,0) scale(0.25,0.25)">
<polyline vector-effect="non-scaling-stroke" points="715,565 770,570 750,690"/>
</g>
<g transform="translate(655,0) scale(0.270709,0.270709)">
<polyline vector-effect="non-scaling-stroke" points="0,90 60,110 70,180 95,185 70,220 0,245"/>
<polyline vector-effect="non-scaling-stroke" points="60,220 120,230 150,270 200,285 235,300 240,340 215,370"/>
<polyline vector-effect="non-scaling-stroke" points="240,470 300,490 350,500 380,520 400,540"/>
<polyline vector-effect="non-scaling-stroke" points="320,540 330,580 360,600 400,580"/>
<polyline vector-effect="non-scaling-stroke" points="160,650 270,640 330,630 340,660 360,700 380,760 400,810"/>
<polyline vector-effect="non-scaling-stroke" points="270,640 260,700 220,750 150,770"/>
<polyline vector-effect="non-scaling-stroke" points="365,330 380,290 420,270 450,240 510,250 540,270 600,255 650,270 660,240 640,200 660,165 740,140 800,120 840,125 850,160 900,165 931,155"/>
<polyline vector-effect="non-scaling-stroke" points="365,330 400,380 420,400"/>
<polyline vector-effect="non-scaling-stroke" points="550,430 550,510 600,500 700,560 760,600 780,640"/>
<polyline vector-effect="non-scaling-stroke" points="600,420 660,470 720,470 760,540 800,540 860,500 931,480"/>
<polyline vector-effect="non-scaling-stroke" points="520,620 570,610 650,650 700,660 780,640 860,620 931,600"/>
<polyline vector-effect="non-scaling-stroke" points="780,560 850,520 900,560 931,560"/>
<polyline vector-effect="non-scaling-stroke" points="320,580 310,640"/>
</g>
<g transform="translate(475,0) scale(0.270603,0.270732)">
<polyline vector-effect="non-scaling-stroke" points="420,470 500,440 520,500 520,560 600,560 660,540"/>
<polyline vector-effect="non-scaling-stroke" points="520,460 580,470 640,470 690,460"/>
<polyline vector-effect="non-scaling-stroke" points="80,480 180,505"/>
<polyline vector-effect="non-scaling-stroke" points="0,520 20,560 10,650"/>
<polyline vector-effect="non-scaling-stroke" points="90,700 95,740 60,780 0,800"/>
<polyline vector-effect="non-scaling-stroke" points="285,645 290,720 330,800"/>
<polyline vector-effect="non-scaling-stroke" points="800,780 790,820"/>
<polyline vector-effect="non-scaling-stroke" points="600,420 640,430 690,420"/>
</g>
<g transform="translate(455,0) scale(0.194346,0.194268)">
<polyline vector-effect="non-scaling-stroke" points="345,365 380,350 420,345 440,330 465,270"/>
<polyline vector-effect="non-scaling-stroke" points="380,350 440,400 480,440 500,450 490,510 450,540 440,580 460,628"/>
<polyline vector-effect="non-scaling-stroke" points="420,345 440,390 445,420"/>
<polyline vector-effect="non-scaling-stroke" points="660,230 665,280 690,360 600,400"/>
<polyline vector-effect="non-scaling-stroke" points="600,400 630,460 700,460 740,440 780,430 760,400 700,370"/>
<polyline vector-effect="non-scaling-stroke" points="690,360 760,390 800,430 880,430 900,440"/>
<polyline vector-effect="non-scaling-stroke" points="910,220 920,280 910,340 925,380 900,440"/>
<polyline vector-effect="non-scaling-stroke" points="910,340 1000,320 1100,340 1132,320"/>
<polyline vector-effect="non-scaling-stroke" points="850,120 880,115 960,130 1000,150 1100,140 1132,150"/>
<polyline vector-effect="non-scaling-stroke" points="850,210 900,220 980,220 1000,150"/>
<polyline vector-effect="non-scaling-stroke" points="940,40 1000,60 1030,120"/>
<polyline vector-effect="non-scaling-stroke" points="1020,0 1030,120"/>
<polyline vector-effect="non-scaling-stroke" points="440,540 500,520 560,520 640,460"/>
<polyline vector-effect="non-scaling-stroke" points="560,520 620,540 720,545 800,540 880,470"/>
<polyline vector-effect="non-scaling-stroke" points="880,470 950,490 1030,470 1080,540 1100,600"/>
<polyline vector-effect="non-scaling-stroke" points="740,545 760,600 820,628"/>
<polyline vector-effect="non-scaling-stroke" points="880,470 840,560 860,628"/>
<polyline vector-effect="non-scaling-stroke" points="1000,470 1060,520 1060,600 1090,628"/>
</g>
<g transform="translate(0,205) scale(0.25,0.25)">
<polyline vector-effect="non-scaling-stroke" points="480,470 520,465 490,540 545,580 600,590 610,690 660,650 690,630 750,590 770,545"/>
<polyline vector-effect="non-scaling-stroke" points="770,600 780,680 830,690 890,660 930,640"/>
<polyline vector-effect="non-scaling-stroke" points="810,600 830,680"/>
<polyline vector-effect="non-scaling-stroke" points="880,600 890,660"/>
<polyline vector-effect="non-scaling-stroke" points="370,700 440,720 480,760 550,780"/>
<polyline vector-effect="non-scaling-stroke" points="560,680 560,820"/>
<polyline vector-effect="non-scaling-stroke" points="98,339 117,334 146,334 166,325"/>
<polyline vector-effect="non-scaling-stroke" points="146,334 144,378"/>
<polyline vector-effect="non-scaling-stroke" points="78,403 112,373 98,339"/>
<polyline vector-effect="non-scaling-stroke" points="144,378 161,388 141,412 127,427"/>
<polyline vector-effect="non-scaling-stroke" points="185,442 229,412 273,400"/>
<polyline vector-effect="non-scaling-stroke" points="224,486 263,493"/>
<polyline vector-effect="non-scaling-stroke" points="283,520 278,549"/>
<polyline vector-effect="non-scaling-stroke" points="390,539 400,559"/>
</g>
<g transform="translate(283,205) scale(0.25,0.25)">
<polyline vector-effect="non-scaling-stroke" points="630,112 715,112 715,150 648,150 625,265 545,268"/>
<polyline vector-effect="non-scaling-stroke" points="715,60 830,20 870,0"/>
<polyline vector-effect="non-scaling-stroke" points="715,120 990,310 1132,225"/>
<polyline vector-effect="non-scaling-stroke" points="760,175 785,385 650,392 640,420"/>
<polyline vector-effect="non-scaling-stroke" points="650,390 600,360 555,368"/>
<polyline vector-effect="non-scaling-stroke" points="640,395 660,460 710,455 735,510 720,560 740,625"/>
<polyline vector-effect="non-scaling-stroke" points="555,432 610,438"/>
<polyline vector-effect="non-scaling-stroke" points="553,455 650,460"/>
<polyline vector-effect="non-scaling-stroke" points="600,480 650,510 690,545"/>
<polyline vector-effect="non-scaling-stroke" points="785,385 840,420 900,400 985,380 990,310"/>
<polyline vector-effect="non-scaling-stroke" points="735,505 780,495 820,470 840,420"/>
<polyline vector-effect="non-scaling-stroke" points="840,490 835,610"/>
<polyline vector-effect="non-scaling-stroke" points="780,495 900,485 960,470 985,430"/>
<polyline vector-effect="non-scaling-stroke" points="900,485 920,590"/>
<polyline vector-effect="non-scaling-stroke" points="940,480 940,580"/>
<polyline vector-effect="non-scaling-stroke" points="960,460 975,580"/>
<polyline vector-effect="non-scaling-stroke" points="985,430 1040,430 1132,445"/>
<polyline vector-effect="non-scaling-stroke" points="1100,0 1110,100 1100,160 1132,200"/>
<polyline vector-effect="non-scaling-stroke" points="1132,570 1090,580 1110,680"/>
</g>
<g transform="translate(566,205) scale(0.25,0.25)">
<polyline vector-effect="non-scaling-stroke" points="300,15 300,290"/>
<polyline vector-effect="non-scaling-stroke" points="300,240 520,240"/>
<polyline vector-effect="non-scaling-stroke" points="0,200 90,215 270,290 300,290"/>
<polyline vector-effect="non-scaling-stroke" points="90,215 100,300 60,420 0,440"/>
<polyline vector-effect="non-scaling-stroke" points="270,290 265,380 230,430 260,500"/>
<polyline vector-effect="non-scaling-stroke" points="0,440 40,470 60,540 0,560"/>
<polyline vector-effect="non-scaling-stroke" points="60,540 100,520 200,520 260,500"/>
<polyline vector-effect="non-scaling-stroke" points="100,540 150,620 250,610 300,620 400,620"/>
<polyline vector-effect="non-scaling-stroke" points="260,500 330,460 420,460 470,420 540,400 570,340 600,330"/>
<polyline vector-effect="non-scaling-stroke" points="540,400 490,520 480,640"/>
<polyline vector-effect="non-scaling-stroke" points="480,540 420,600 400,620"/>
<polyline vector-effect="non-scaling-stroke" points="480,640 600,620 660,650 780,550"/>
<polyline vector-effect="non-scaling-stroke" points="660,460 700,510 780,550"/>
<polyline vector-effect="non-scaling-stroke" points="650,650 640,820"/>
<polyline vector-effect="non-scaling-stroke" points="480,640 480,730 420,740 380,820"/>
<polyline vector-effect="non-scaling-stroke" points="480,720 620,820"/>
<polyline vector-effect="non-scaling-stroke" points="0,700 100,690 150,760 100,820"/>
</g>
<g transform="translate(655,172) scale(0.243962,0.243902)">
<polyline vector-effect="non-scaling-stroke" points="330,490 430,490 530,450 590,430 600,340 620,300"/>
<polyline vector-effect="non-scaling-stroke" points="530,450 545,500"/>
<polyline vector-effect="non-scaling-stroke" points="0,380 190,380"/>
<polyline vector-effect="non-scaling-stroke" points="160,210 240,140 260,90 300,20"/>
<polyline vector-effect="non-scaling-stroke" points="240,140 400,210 440,190"/>
<polyline vector-effect="non-scaling-stroke" points="380,0 400,60 440,180"/>
<polyline vector-effect="non-scaling-stroke" points="720,0 710,100 740,200 780,270 735,300"/>
<polyline vector-effect="non-scaling-stroke" points="950,0 940,100 840,180 750,200"/>
<polyline vector-effect="non-scaling-stroke" points="870,330 940,320"/>
<polyline vector-effect="non-scaling-stroke" points="1000,0 1030,150 1033,170"/>
<polyline vector-effect="non-scaling-stroke" points="150,160 180,100"/>
<polyline vector-effect="non-scaling-stroke" points="180,0 190,60 240,140"/>
</g>
<g transform="translate(0,410) scale(0.25,0.25)">
<polyline vector-effect="non-scaling-stroke" points="470,0 480,100 540,130 575,145 560,270 545,295"/>
<polyline vector-effect="non-scaling-stroke" points="540,130 640,110 660,160 740,190 770,250 800,260 810,330 720,320 710,380"/>
<polyline vector-effect="non-scaling-stroke" points="575,285 600,400 630,375 670,385 700,375 720,330"/>
<polyline vector-effect="non-scaling-stroke" points="700,380 760,420 810,450 800,500 850,500 890,470 880,420 850,380 800,380 800,330"/>
<polyline vector-effect="non-scaling-stroke" points="610,375 580,460 590,500 560,540 545,620 550,680 530,730 515,820"/>
<polyline vector-effect="non-scaling-stroke" points="890,480 830,560 810,570 800,650"/>
<polyline vector-effect="non-scaling-stroke" points="830,570 840,600 900,640"/>
<polyline vector-effect="non-scaling-stroke" points="520,0 560,40 640,20 700,0"/>
</g>
<g transform="translate(566,410) scale(0.25,0.25)">
<polyline vector-effect="non-scaling-stroke" points="20,270 220,280 260,290"/>
<polyline vector-effect="non-scaling-stroke" points="230,60 240,140 280,140 280,180 240,180 235,250"/>
<polyline vector-effect="non-scaling-stroke" points="40,20 110,25 150,75 190,50 230,60"/>
<polyline vector-effect="non-scaling-stroke" points="280,140 380,180 400,200 410,220 470,200 500,230 520,260"/>
<polyline vector-effect="non-scaling-stroke" points="370,90 410,75 460,100 480,140 460,190"/>
<polyline vector-effect="non-scaling-stroke" points="500,140 580,140 620,125"/>
<polyline vector-effect="non-scaling-stroke" points="210,290 210,380 190,380 190,520 130,530"/>
<polyline vector-effect="non-scaling-stroke" points="250,290 330,285 380,240 460,260 470,320 440,385"/>
<polyline vector-effect="non-scaling-stroke" points="310,280 390,380 430,385 440,460 455,500"/>
<polyline vector-effect="non-scaling-stroke" points="200,490 250,460 330,420 390,380"/>
<polyline vector-effect="non-scaling-stroke" points="350,540 380,530 390,560 350,575 350,540"/>
<polyline vector-effect="non-scaling-stroke" points="420,470 440,500 420,500"/>
</g>
<g transform="translate(0,615) scale(0.25,0.25)">
<polyline vector-effect="non-scaling-stroke" points="515,0 515,130 520,160 480,300 500,330 510,370 580,380 585,420"/>
</g></g>
</g></svg><svg width="907" height="720" viewBox="225 78 907 720" style="position:absolute;left:0;top:0;font-family:'Liberation Sans',sans-serif">
<defs>
<filter id="blur2" x="-50%" y="-50%" width="200%" height="200%"><feGaussianBlur stdDeviation="1.8"/></filter>
<filter id="shd" x="-50%" y="-50%" width="200%" height="200%"><feGaussianBlur stdDeviation="2.5"/></filter>
<g id="pin">
<ellipse cx="11" cy="10" rx="8.5" ry="4.2" transform="rotate(-15 11 10)" fill="#2e3a40" opacity="0.38" filter="url(#shd)"/>
<rect x="-1.3" y="5" width="2.7" height="22.5" fill="#a9aaad"/>
<rect x="-1.3" y="5" width="0.6" height="22.5" fill="#7d7f83"/>
<ellipse cx="0" cy="27.3" rx="2.2" ry="1.1" fill="#3b3b3b"/>
<circle cx="0" cy="0" r="6.6" fill="#fb3b30"/>
<circle cx="-1.9" cy="-1.9" r="1.6" fill="#fff"/>
</g>
</defs>
<g fill="#e1ebd5">
<ellipse cx="777" cy="324" rx="13" ry="6" transform="rotate(25 777 324)"/>
<ellipse cx="784" cy="360" rx="8" ry="9"/>
<rect x="285" y="106" width="12" height="17" rx="4"/>
<ellipse cx="340" cy="199" rx="7" ry="9"/>
<ellipse cx="392" cy="450" rx="8" ry="5" transform="rotate(-40 392 450)"/>
<ellipse cx="404" cy="433" rx="6" ry="4"/>
<ellipse cx="339" cy="491" rx="6" ry="3"/>
<ellipse cx="432" cy="529" rx="7" ry="6"/>
<ellipse cx="841" cy="548" rx="10" ry="7"/>
<rect x="810" y="562" width="15" height="6" rx="2"/>
<rect x="811" y="586" width="10" height="22" rx="4"/>
<rect x="853.5" y="575.5" width="13.5" height="13.5" rx="3"/>
<ellipse cx="845" cy="601" rx="4.5" ry="5.5"/>
<ellipse cx="932" cy="511" rx="6" ry="5"/>
<ellipse cx="1101" cy="153" rx="5" ry="4"/>
</g>
<path d="M887.25,488 L891,498 L898.5,508 M913.5,513 L916,523 L921,540.5" fill="none" stroke="#a4c0d6" stroke-width="2"/>
<!-- city dots -->
<g fill="#fff" stroke="#444" stroke-width="0.9">
<circle cx="313.75" cy="206" r="2.6"/>
<circle cx="341.75" cy="227" r="2.6"/>
<circle cx="733" cy="144" r="2.6"/>
<circle cx="746" cy="166" r="2.6"/>
<circle cx="800.1" cy="218.7" r="2.6"/>
<circle cx="899" cy="295.5" r="2.6"/>
<circle cx="1119" cy="361" r="2.6"/>
<circle cx="751.75" cy="428.75" r="2.6"/>
<circle cx="927.7" cy="469.9" r="2.6"/>
<circle cx="341.75" cy="438" r="2.6"/>
<circle cx="504.5" cy="588" r="2.6"/>
</g>
<g font-size="9" font-weight="bold" fill="#3a3a3a" stroke="#fff" stroke-width="2" stroke-linejoin="round" style="paint-order:stroke" letter-spacing="0.35">
<text x="273.75" y="201.25">Toronto</text>
<text x="346.75" y="238">New York</text>
<text x="694.25" y="154">London</text>
<text x="718.5" y="176" fill="#555">Paris</text>
<text x="775.8" y="228.5" letter-spacing="-0.1">Rom</text>
<text x="870.5" y="306.25">Kairo</text>
<text x="1091.5" y="317.5">Neu-Delhi</text>
<text x="1077.75" y="372.75" letter-spacing="0.7">Mumbai</text>
<text x="756.75" y="440.25" letter-spacing="0">Lagos</text>
<text x="932.7" y="464.6" letter-spacing="0.45">Nairobi</text>
<text x="305" y="434.25" letter-spacing="0.3">Bogotá</text>
<text x="509.25" y="599.75">Rio de Janeiro</text>
</g>
<g font-size="17.5" font-weight="bold" fill="#4e4e4f" stroke="#4e4e4f" stroke-width="0.5">
<text x="235" y="145" letter-spacing="9">ERIKA</text>
<text x="331.25" y="514.25" letter-spacing="9.6">SÜDAMERIKA</text>
<text x="778" y="405.5" letter-spacing="9.5">AFRIKA</text>
<text x="1127.5" y="146">A</text>
</g>
<g font-size="13" font-weight="bold" font-style="italic" fill="#8eb4c4" letter-spacing="4.2">
<text x="458.75" y="298">Nordatlantik</text>
<text x="596.75" y="619" letter-spacing="4.1">Südatlantik</text>
<text x="1076.5" y="554" letter-spacing="4.2">Indisc</text>
</g>
<!-- pins -->
<use href="#pin" x="968.5" y="202.5"/>
<use href="#pin" x="351.5" y="333.4"/>
<use href="#pin" x="417.5" y="365"/>
<use href="#pin" x="931.4" y="432.4"/>
<use href="#pin" x="456.75" y="486"/>
<use href="#pin" x="861.5" y="556"/>
<!-- callout -->
<path d="M859,407.6 L904,407.6 Q909,407.6 909,412.6 L909,420 L921,431.4 L909,441 L909,451 Q909,456 904,456 L859,456 Q854,456 854,451 L854,412.6 Q854,407.6 859,407.6 Z" fill="#847c77" filter="url(#shd)" opacity="0.35" transform="translate(0,1)"/>
<path d="M859,407.6 L904,407.6 Q909,407.6 909,412.6 L909,420 L921,431.4 L909,441 L909,451 Q909,456 904,456 L859,456 Q854,456 854,451 L854,412.6 Q854,407.6 859,407.6 Z" fill="#857c77"/>
<text x="866.5" y="435.8" font-size="12.5" fill="#fff" stroke="#fff" stroke-width="0.35" letter-spacing="-0.2">Kenia</text>
<!-- scale bar -->
<g font-size="12" fill="#333" stroke="#333" stroke-width="0.35" letter-spacing="0.4">
<text x="238.6" y="95.1">0</text>
<text x="275" y="95.1">1.000</text>
<text x="324.5" y="95.1">2.000</text>
<text x="374.7" y="95.1">3.000 km</text>
</g>
<rect x="243" y="104" width="148" height="8" rx="4" fill="#656b6b"/>
<rect x="292" y="105" width="50" height="6" fill="#dfe9ec"/>
<!-- legal -->
<text x="231.4" y="792.8" font-size="9.2" font-weight="bold" fill="#67808a" letter-spacing="0.35">Rechtl. Informationen</text>
<rect x="231" y="794" width="101" height="1" fill="#67808a"/>
<!-- compass -->
<circle cx="1091" cy="731.5" r="26.2" fill="#000" opacity="0.12" filter="url(#blur2)"/>
<circle cx="1091" cy="731" r="26.2" fill="#fff"/>
<circle cx="1091" cy="731" r="15.3" fill="none" stroke="#9ac7d6" stroke-width="1.8"/>
<path d="M1087.8,712.7 L1090.9,707.2 L1093.9,712.7 Z" fill="#f33"/>
<g stroke="#b9b9b9" stroke-width="1.1"><path d="M1068,731 L1072,731 M1110,731 L1114,731 M1091,750 L1091,753.5"/></g>
<text x="1091" y="736" font-size="13.4" fill="#c2c2c2" text-anchor="middle">3D</text>
<!-- zoom buttons -->
<rect x="1063.2" y="764.4" width="26.4" height="19" rx="3.5" fill="#000" opacity="0.25" filter="url(#blur2)"/>
<rect x="1091.1" y="764.4" width="26.6" height="19" rx="3.5" fill="#000" opacity="0.25" filter="url(#blur2)"/>
<rect x="1063.2" y="763.9" width="26.4" height="18.9" rx="3.5" fill="#fff"/>
<rect x="1091.1" y="763.9" width="26.6" height="18.9" rx="3.5" fill="#fff"/>
<path d="M1070.3,773.2 L1082.2,773.2 M1098.5,773.2 L1110,773.2 M1104.3,767.5 L1104.3,779" stroke="#222" stroke-width="1.2"/>
</svg>
</div>
<div style="position:absolute;left:222.5px;top:435.5px;width:5px;height:5px;border-radius:50%;background:#8c8c8c"></div>
<div id="bottom"><div style="position:absolute;left:781px;top:1px;width:229px;height:18px;border:1px solid #5c5c5c;border-radius:4px;background:#3a3a3a;overflow:hidden">
<div style="position:absolute;left:0;top:0;width:77px;height:16px;background:#6e6e6e"></div>
<div style="position:absolute;left:151px;top:0;width:1px;height:16px;background:#5c5c5c"></div>
<div style="position:absolute;left:0;top:-1px;width:77px;text-align:center;font-size:13.2px;line-height:18px;color:#ececec;letter-spacing:0.1px">Standard</div>
<div style="position:absolute;left:77px;top:-1px;width:74px;text-align:center;font-size:13.2px;line-height:18px;color:#ececec;letter-spacing:0.3px">Satellit</div>
<div style="position:absolute;left:152px;top:-1px;width:76px;text-align:center;font-size:13.2px;line-height:18px;color:#ececec;letter-spacing:0.3px">Hybrid</div>
</div>
<svg style="position:absolute;left:1020px;top:-1px" width="112" height="22" viewBox="1020 797 112 22">
<polygon points="1034,802.4 1035.4,803.8 1037.3,803.3 1037.8,805.2 1039.7,805.7 1039.2,807.6 1040.6,809 1039.2,810.4 1039.7,812.3 1037.8,812.8 1037.3,814.7 1035.4,814.2 1034,815.6 1032.6,814.2 1030.7,814.7 1030.2,812.8 1028.3,812.3 1028.8,810.4 1027.4,809 1028.8,807.6 1028.3,805.7 1030.2,805.2 1030.7,803.3 1032.6,803.8" fill="#f08a1a" transform="translate(0,1)"/>
<path d="M1030.5,810 L1033,812.5 L1037.5,806.5" fill="none" stroke="#4cae2a" stroke-width="1.5"/>
<circle cx="1088.7" cy="810" r="7.3" fill="#0d2c5e"/>
<circle cx="1088.7" cy="810" r="6.6" fill="#2a78d0"/>
<path d="M1085,806 L1089,804.5 L1093,806.5 L1094,809.5 L1091.5,812 L1089,814 L1087,811 L1084.5,809 Z" fill="#e0b040"/>
</svg>
<div style="position:absolute;left:1045.8px;top:4px;font-size:11px;line-height:14px;color:#e2e2e2;letter-spacing:0.6px">190</div>
<div style="position:absolute;left:1108.2px;top:4px;font-size:11px;line-height:14px;color:#e2e2e2;letter-spacing:0.5px">54</div>
</div>
</body></html>
